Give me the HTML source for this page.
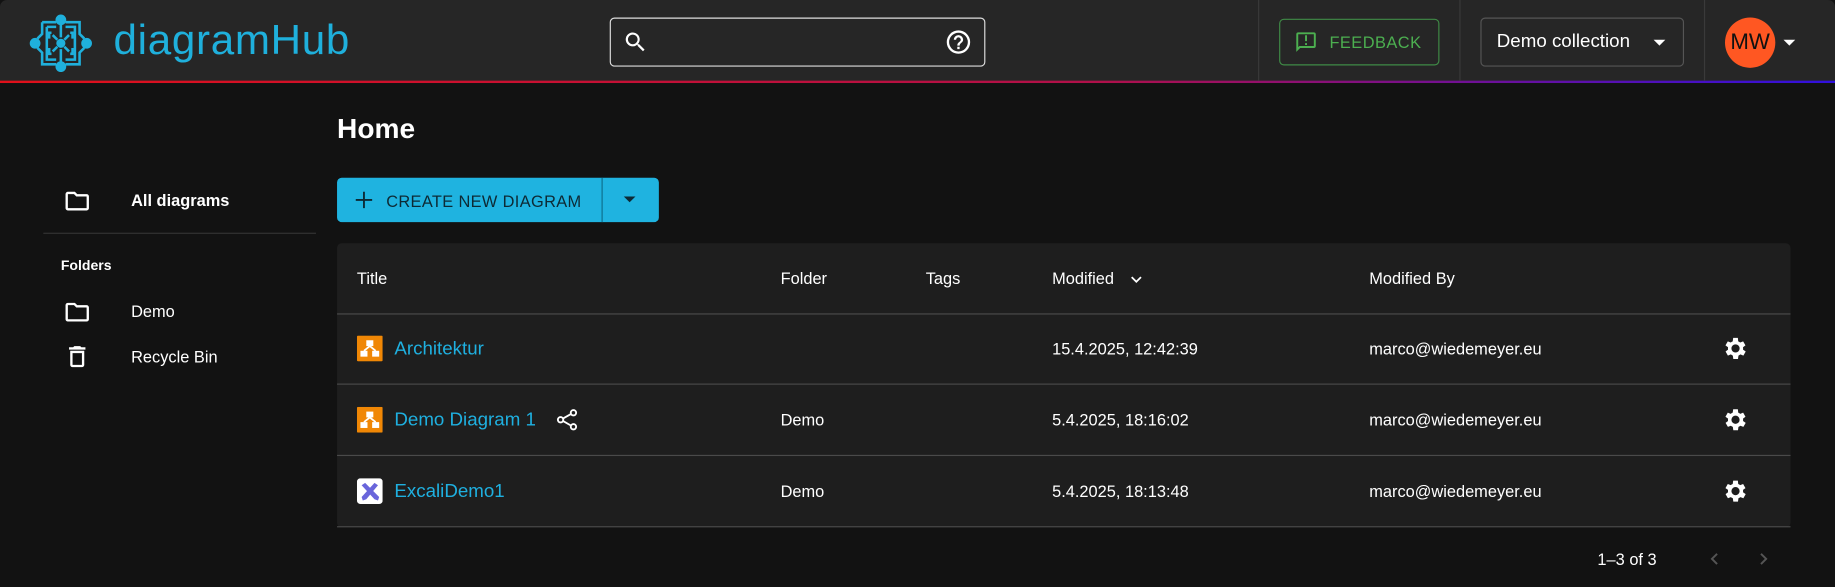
<!DOCTYPE html>
<html><head><meta charset="utf-8"><style>
*{box-sizing:border-box;margin:0;padding:0}
html,body{width:1835px;height:587px;overflow:hidden;background:#121212;font-family:"Liberation Sans",Arial,sans-serif;color:#fff}
#w{position:absolute;left:0;top:0;width:1568px;height:502px;transform:scale(1.17028,1.1693);transform-origin:0 0}
.a{position:absolute}
.hdr{left:0;top:0;width:1568px;height:71px;background:#262626;border-radius:6px 6px 0 0}
.hl{left:0;top:69px;width:1568px;height:2px;background:linear-gradient(90deg,#e0101a,#b0104a 60%,#3010e0)}
.sep{top:0;width:1px;height:69px;background:#3a3a3a}
.t{font-size:14px;white-space:nowrap}
.row{left:288px;width:1242px;height:1px;background:#4a4a4a}
.link{color:#1fb0e0;font-size:16px}
</style></head><body><div id="w">
<div class="a hdr"></div><div class="a hl"></div>
<svg class="a" style="left:24px;top:11px" width="56" height="52" viewBox="0 0 56 52" fill="none" stroke="#1fb0dc" stroke-width="2.2">
<path d="M12 8h12M32 8h12v10l4 4M48 30l-4 4v10h-12M24 44h-12v-10l-4-4M8 22l4-4v-10"/>
<path d="M16 12h8M32 12h8v28h-8M24 40h-8v-28"/>
<circle cx="28" cy="6" r="3.5" fill="#1fb0dc"/><circle cx="28" cy="46" r="3.5" fill="#1fb0dc"/>
<circle cx="6" cy="26" r="3.5" fill="#1fb0dc"/><circle cx="50" cy="26" r="3.5" fill="#1fb0dc"/>
<circle cx="28" cy="26" r="2.8" fill="#1fb0dc"/>
<path d="M28 10v11M28 31v11M21 19l4 4M35 19l-4 4M21 33l4-4M35 33l-4-4M20 17h-2v5M36 17h2v5M20 35h-2v-5M36 35h2v-5"/>
</svg>
<div class="a" style="left:97px;top:13px;font-size:36px;color:#1fb0dc;letter-spacing:.6px">diagramHub</div>
<div class="a" style="left:521px;top:15px;width:321px;height:42px;border:1px solid #ddd;border-radius:4px"></div>
<svg class="a" style="left:532px;top:25px" width="22" height="22" viewBox="0 0 24 24" fill="#fff"><path d="M15.5 14h-.8l-.3-.3A6.5 6.5 0 1 0 9.5 16a6.5 6.5 0 0 0 4.2-1.6l.3.3v.8l5 5 1.5-1.5-5-5zm-6 0C7 14 5 12 5 9.5S7 5 9.5 5 14 7 14 9.5 12 14 9.5 14z"/></svg>
<svg class="a" style="left:807px;top:24px" width="24" height="24" viewBox="0 0 24 24" fill="#fff"><path d="M11 18h2v-2h-2v2zm1-16a10 10 0 1 0 0 20 10 10 0 0 0 0-20zm0 18a8 8 0 1 1 0-16 8 8 0 0 1 0 16zm0-14a4 4 0 0 0-4 4h2a2 2 0 1 1 4 0c0 2-3 1.75-3 5h2c0-2.25 3-2.5 3-5a4 4 0 0 0-4-4z"/></svg>
<div class="a sep" style="left:1075px"></div><div class="a sep" style="left:1247px"></div><div class="a sep" style="left:1456px"></div>
<div class="a" style="left:1093px;top:16px;width:137px;height:40px;border:1px solid #3f8a46;border-radius:4px"></div>
<svg class="a" style="left:1106px;top:26px" width="20" height="20" viewBox="0 0 24 24" fill="#4caf50"><path d="M20 2H4a2 2 0 0 0-2 2v18l4-4h14a2 2 0 0 0 2-2V4a2 2 0 0 0-2-2zm0 14H5.2L4 17.2V4h16v12zM11 5h2v6h-2zm0 8h2v2h-2z"/></svg>
<div class="a t" style="left:1136px;top:28px;color:#4caf50;font-size:14px;letter-spacing:.4px">FEEDBACK</div>
<div class="a" style="left:1265px;top:15px;width:174px;height:42px;border:1px solid #555;border-radius:4px"></div>
<div class="a" style="left:1279px;top:27px;font-size:16px">Demo collection</div>
<div class="a" style="left:1413px;top:34px;border:5px solid transparent;border-top-color:#fff"></div>
<div class="a" style="left:1474px;top:15px;width:43px;height:43px;border-radius:50%;background:#ff5722;color:#111;font-size:19px;text-align:center;line-height:43px">MW</div>
<div class="a" style="left:1524px;top:34px;border:5px solid transparent;border-top-color:#fff"></div>

<svg class="a" style="left:54px;top:160px" width="24" height="24" viewBox="0 0 24 24" fill="#fff"><path d="M9.2 6l2 2H20v10H4V6h5.2M10 4H4a2 2 0 0 0-2 2v12a2 2 0 0 0 2 2h16a2 2 0 0 0 2-2V8a2 2 0 0 0-2-2h-8l-2-2z"/></svg>
<div class="a t" style="left:112px;top:163px;font-weight:bold">All diagrams</div>
<div class="a" style="left:37px;top:199px;width:233px;height:1px;background:#333"></div>
<div class="a" style="left:52px;top:220px;font-size:12px;font-weight:bold">Folders</div>
<svg class="a" style="left:54px;top:255px" width="24" height="24" viewBox="0 0 24 24" fill="#fff"><path d="M9.2 6l2 2H20v10H4V6h5.2M10 4H4a2 2 0 0 0-2 2v12a2 2 0 0 0 2 2h16a2 2 0 0 0 2-2V8a2 2 0 0 0-2-2h-8l-2-2z"/></svg>
<div class="a t" style="left:112px;top:258px">Demo</div>
<svg class="a" style="left:54px;top:293px" width="24" height="24" viewBox="0 0 24 24" fill="#fff"><path d="M16 9v10H8V9h8m-1.5-6h-5l-1 1H5v2h14V4h-3.5l-1-1zM18 7H6v12a2 2 0 0 0 2 2h8a2 2 0 0 0 2-2V7z"/></svg>
<div class="a t" style="left:112px;top:297px">Recycle Bin</div>

<div class="a" style="left:288px;top:97px;font-size:24px;font-weight:bold">Home</div>
<div class="a" style="left:288px;top:152px;width:275px;height:38px;background:#1fb3e0;border-radius:4px"></div>
<div class="a" style="left:514px;top:152px;width:1px;height:38px;background:#0d6f8e"></div>
<svg class="a" style="left:303px;top:163px" width="16" height="16" viewBox="0 0 16 16" stroke="#0d2a35" stroke-width="1.6"><path d="M8 1v14M1 8h14"/></svg>
<div class="a t" style="left:330px;top:164px;color:#0d2a35;letter-spacing:.3px">CREATE NEW DIAGRAM</div>
<div class="a" style="left:533px;top:168px;border:5px solid transparent;border-top-color:#0d2a35"></div>

<div class="a" style="left:288px;top:208px;width:1242px;height:243px;background:#1e1e1e;border-radius:4px"></div>
<div class="a t" style="left:305px;top:230px">Title</div>
<div class="a t" style="left:667px;top:230px">Folder</div>
<div class="a t" style="left:791px;top:230px">Tags</div>
<div class="a t" style="left:899px;top:230px">Modified</div>
<svg class="a" style="left:962px;top:230px" width="18" height="18" viewBox="0 0 24 24" fill="#fff"><path d="M7.4 8.6L12 13.2l4.6-4.6L18 10l-6 6-6-6z"/></svg>
<div class="a t" style="left:1170px;top:230px">Modified By</div>
<div class="a row" style="top:268px"></div><div class="a row" style="top:328px"></div><div class="a row" style="top:389px"></div><div class="a row" style="top:450px"></div>

<svg class="a" style="left:305px;top:287px" width="22" height="22" viewBox="0 0 22 22"><rect width="22" height="22" rx="1" fill="#f08705"/><rect x="8" y="4" width="6" height="5" fill="#fff"/><rect x="3" y="13" width="6" height="5" fill="#fff"/><rect x="13" y="13" width="6" height="5" fill="#fff"/><path d="M11 9L6 13M11 9l5 4" stroke="#fff" stroke-width="1.5"/></svg>
<div class="a link" style="left:337px;top:290px">Architektur</div>
<div class="a t" style="left:899px;top:290px">15.4.2025, 12:42:39</div>
<div class="a t" style="left:1170px;top:290px">marco@wiedemeyer.eu</div>

<svg class="a" style="left:305px;top:348px" width="22" height="22" viewBox="0 0 22 22"><rect width="22" height="22" rx="1" fill="#f08705"/><rect x="8" y="4" width="6" height="5" fill="#fff"/><rect x="3" y="13" width="6" height="5" fill="#fff"/><rect x="13" y="13" width="6" height="5" fill="#fff"/><path d="M11 9L6 13M11 9l5 4" stroke="#fff" stroke-width="1.5"/></svg>
<div class="a link" style="left:337px;top:351px">Demo Diagram 1</div>
<svg class="a" style="left:474px;top:348px" width="22" height="22" viewBox="0 0 22 22" fill="none" stroke="#fff" stroke-width="1.6"><circle cx="16" cy="5" r="2.3"/><circle cx="5" cy="11" r="2.3"/><circle cx="16" cy="17" r="2.3"/><path d="M7 10l7-4M7 12l7 4"/></svg>
<div class="a t" style="left:667px;top:351px">Demo</div>
<div class="a t" style="left:899px;top:351px">5.4.2025, 18:16:02</div>
<div class="a t" style="left:1170px;top:351px">marco@wiedemeyer.eu</div>

<svg class="a" style="left:305px;top:409px" width="22" height="22" viewBox="0 0 22 22"><rect width="22" height="22" rx="3" fill="#fff"/><path d="M4 6l3-2 12 12-1 3-3-1z" fill="#6965db"/><path d="M18 6l-3-2-11 12 1 3 3-1z" fill="#6965db"/></svg>
<div class="a link" style="left:337px;top:412px">ExcaliDemo1</div>
<div class="a t" style="left:667px;top:412px">Demo</div>
<div class="a t" style="left:899px;top:412px">5.4.2025, 18:13:48</div>
<div class="a t" style="left:1170px;top:412px">marco@wiedemeyer.eu</div>

<div class="a" style="left:1471px;top:286px"><svg width="24" height="24" viewBox="0 0 24 24" fill="#fff"><path d="M19.4 13a7.5 7.5 0 0 0 0-2l2.1-1.6-2-3.5-2.5 1a7 7 0 0 0-1.7-1L15 3h-4l-.4 2.9a7 7 0 0 0-1.7 1l-2.5-1-2 3.5L6.6 11a7.5 7.5 0 0 0 0 2l-2.1 1.6 2 3.5 2.5-1a7 7 0 0 0 1.7 1l.4 2.9h4l.4-2.9a7 7 0 0 0 1.7-1l2.5 1 2-3.5L19.4 13zM13 15.5a3.5 3.5 0 1 1 0-7 3.5 3.5 0 0 1 0 7z" transform="translate(-1 0)"/></svg></div>
<div class="a" style="left:1471px;top:347px"><svg width="24" height="24" viewBox="0 0 24 24" fill="#fff"><path d="M19.4 13a7.5 7.5 0 0 0 0-2l2.1-1.6-2-3.5-2.5 1a7 7 0 0 0-1.7-1L15 3h-4l-.4 2.9a7 7 0 0 0-1.7 1l-2.5-1-2 3.5L6.6 11a7.5 7.5 0 0 0 0 2l-2.1 1.6 2 3.5 2.5-1a7 7 0 0 0 1.7 1l.4 2.9h4l.4-2.9a7 7 0 0 0 1.7-1l2.5 1 2-3.5L19.4 13zM13 15.5a3.5 3.5 0 1 1 0-7 3.5 3.5 0 0 1 0 7z" transform="translate(-1 0)"/></svg></div>
<div class="a" style="left:1471px;top:408px"><svg width="24" height="24" viewBox="0 0 24 24" fill="#fff"><path d="M19.4 13a7.5 7.5 0 0 0 0-2l2.1-1.6-2-3.5-2.5 1a7 7 0 0 0-1.7-1L15 3h-4l-.4 2.9a7 7 0 0 0-1.7 1l-2.5-1-2 3.5L6.6 11a7.5 7.5 0 0 0 0 2l-2.1 1.6 2 3.5 2.5-1a7 7 0 0 0 1.7 1l.4 2.9h4l.4-2.9a7 7 0 0 0 1.7-1l2.5 1 2-3.5L19.4 13zM13 15.5a3.5 3.5 0 1 1 0-7 3.5 3.5 0 0 1 0 7z" transform="translate(-1 0)"/></svg></div>

<div class="a t" style="left:1365px;top:470px">1–3 of 3</div>
<svg class="a" style="left:1455px;top:467px" width="20" height="22" viewBox="0 0 24 24" fill="#555"><path d="M15.4 7.4L14 6l-6 6 6 6 1.4-1.4L10.8 12z"/></svg>
<svg class="a" style="left:1497px;top:467px" width="20" height="22" viewBox="0 0 24 24" fill="#555"><path d="M10 6L8.6 7.4 13.2 12l-4.6 4.6L10 18l6-6z"/></svg>
</div></body></html>
